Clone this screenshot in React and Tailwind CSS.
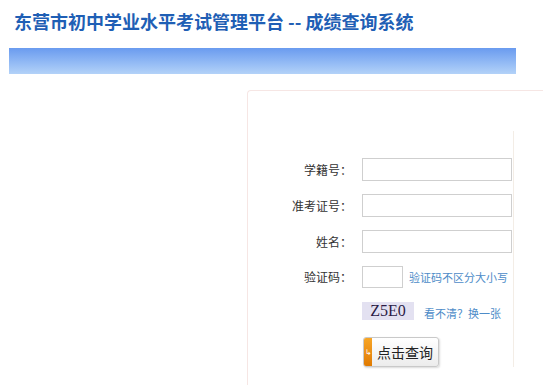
import React from 'react';

const fields = [
  { label: '学籍号', name: 'xjh' },
  { label: '准考证号', name: 'zkzh' },
  { label: '姓名', name: 'xm' },
];

const App = () => {
  return (
    <div className="w-[550px] h-[385px] overflow-hidden bg-white font-['Noto_Sans_CJK_SC','Liberation_Sans',sans-serif]">
      <h1 className="pl-[14px] pt-[11px] h-[48px] text-[18px] leading-[20px] font-bold text-[#1f5fb5]">
        东营市初中学业水平考试管理平台 -- 成绩查询系统
      </h1>
      <div className="ml-[9px] w-[507px] h-[26px] bg-gradient-to-b from-[#6a9bef] to-[#b3d2f8]" />

      <div className="ml-[247px] mt-[16px] w-[296px] h-[300px] border-l border-t border-[#f6e6e4] rounded-tl-[4px] pt-[40px]">
        <div className="w-[266px] border-r border-[#f3ede6] pt-[27px]">
          <div className="flex flex-col gap-[13px]">
            {fields.map((f) => (
              <div key={f.name} className="flex items-center h-[23px]">
                <label className="w-[104px] text-right text-[12px] text-[#333] whitespace-nowrap">{f.label}：</label>
                <input
                  type="text"
                  className="ml-[10px] w-[150px] h-[23px] border border-[#cfcfcf] bg-white outline-none"
                />
              </div>
            ))}
            <div className="flex items-center h-[22px]">
              <label className="w-[104px] text-right text-[12px] text-[#333] whitespace-nowrap">验证码：</label>
              <input
                type="text"
                className="ml-[10px] w-[41px] h-[22px] border border-[#cfcfcf] bg-white outline-none"
              />
              <span className="ml-[6px] text-[11px] text-[#4d8cc8] whitespace-nowrap">验证码不区分大小写</span>
            </div>
          </div>
          <div className="flex items-end ml-[114px] mt-[14px]">
            <div className="w-[52px] h-[18px] bg-[#e3e1f1] flex items-center justify-center font-['Liberation_Serif',serif] text-[16px] text-[#2b1b45] leading-none">
              Z5E0
            </div>
            <span className="ml-[10px] text-[11px] leading-[14px] text-[#4d8cc8] whitespace-nowrap">看不清？换一张</span>
          </div>
          <button className="ml-[115px] mt-[17px] mb-[20px] w-[76px] h-[30px] flex rounded-[3px] border border-[#c9c9c9] overflow-hidden bg-gradient-to-b from-white to-[#ececec] shadow-[1px_1px_2px_rgba(0,0,0,0.15)]">
            <span className="w-[8px] h-full bg-gradient-to-b from-[#f7a525] to-[#e07a00] text-white text-[8px] leading-none flex items-center justify-center">↳</span>
            <span className="flex-1 flex items-center justify-center text-[14px] text-[#222]">点击查询</span>
          </button>
        </div>
      </div>
    </div>
  );
};

export default App;
